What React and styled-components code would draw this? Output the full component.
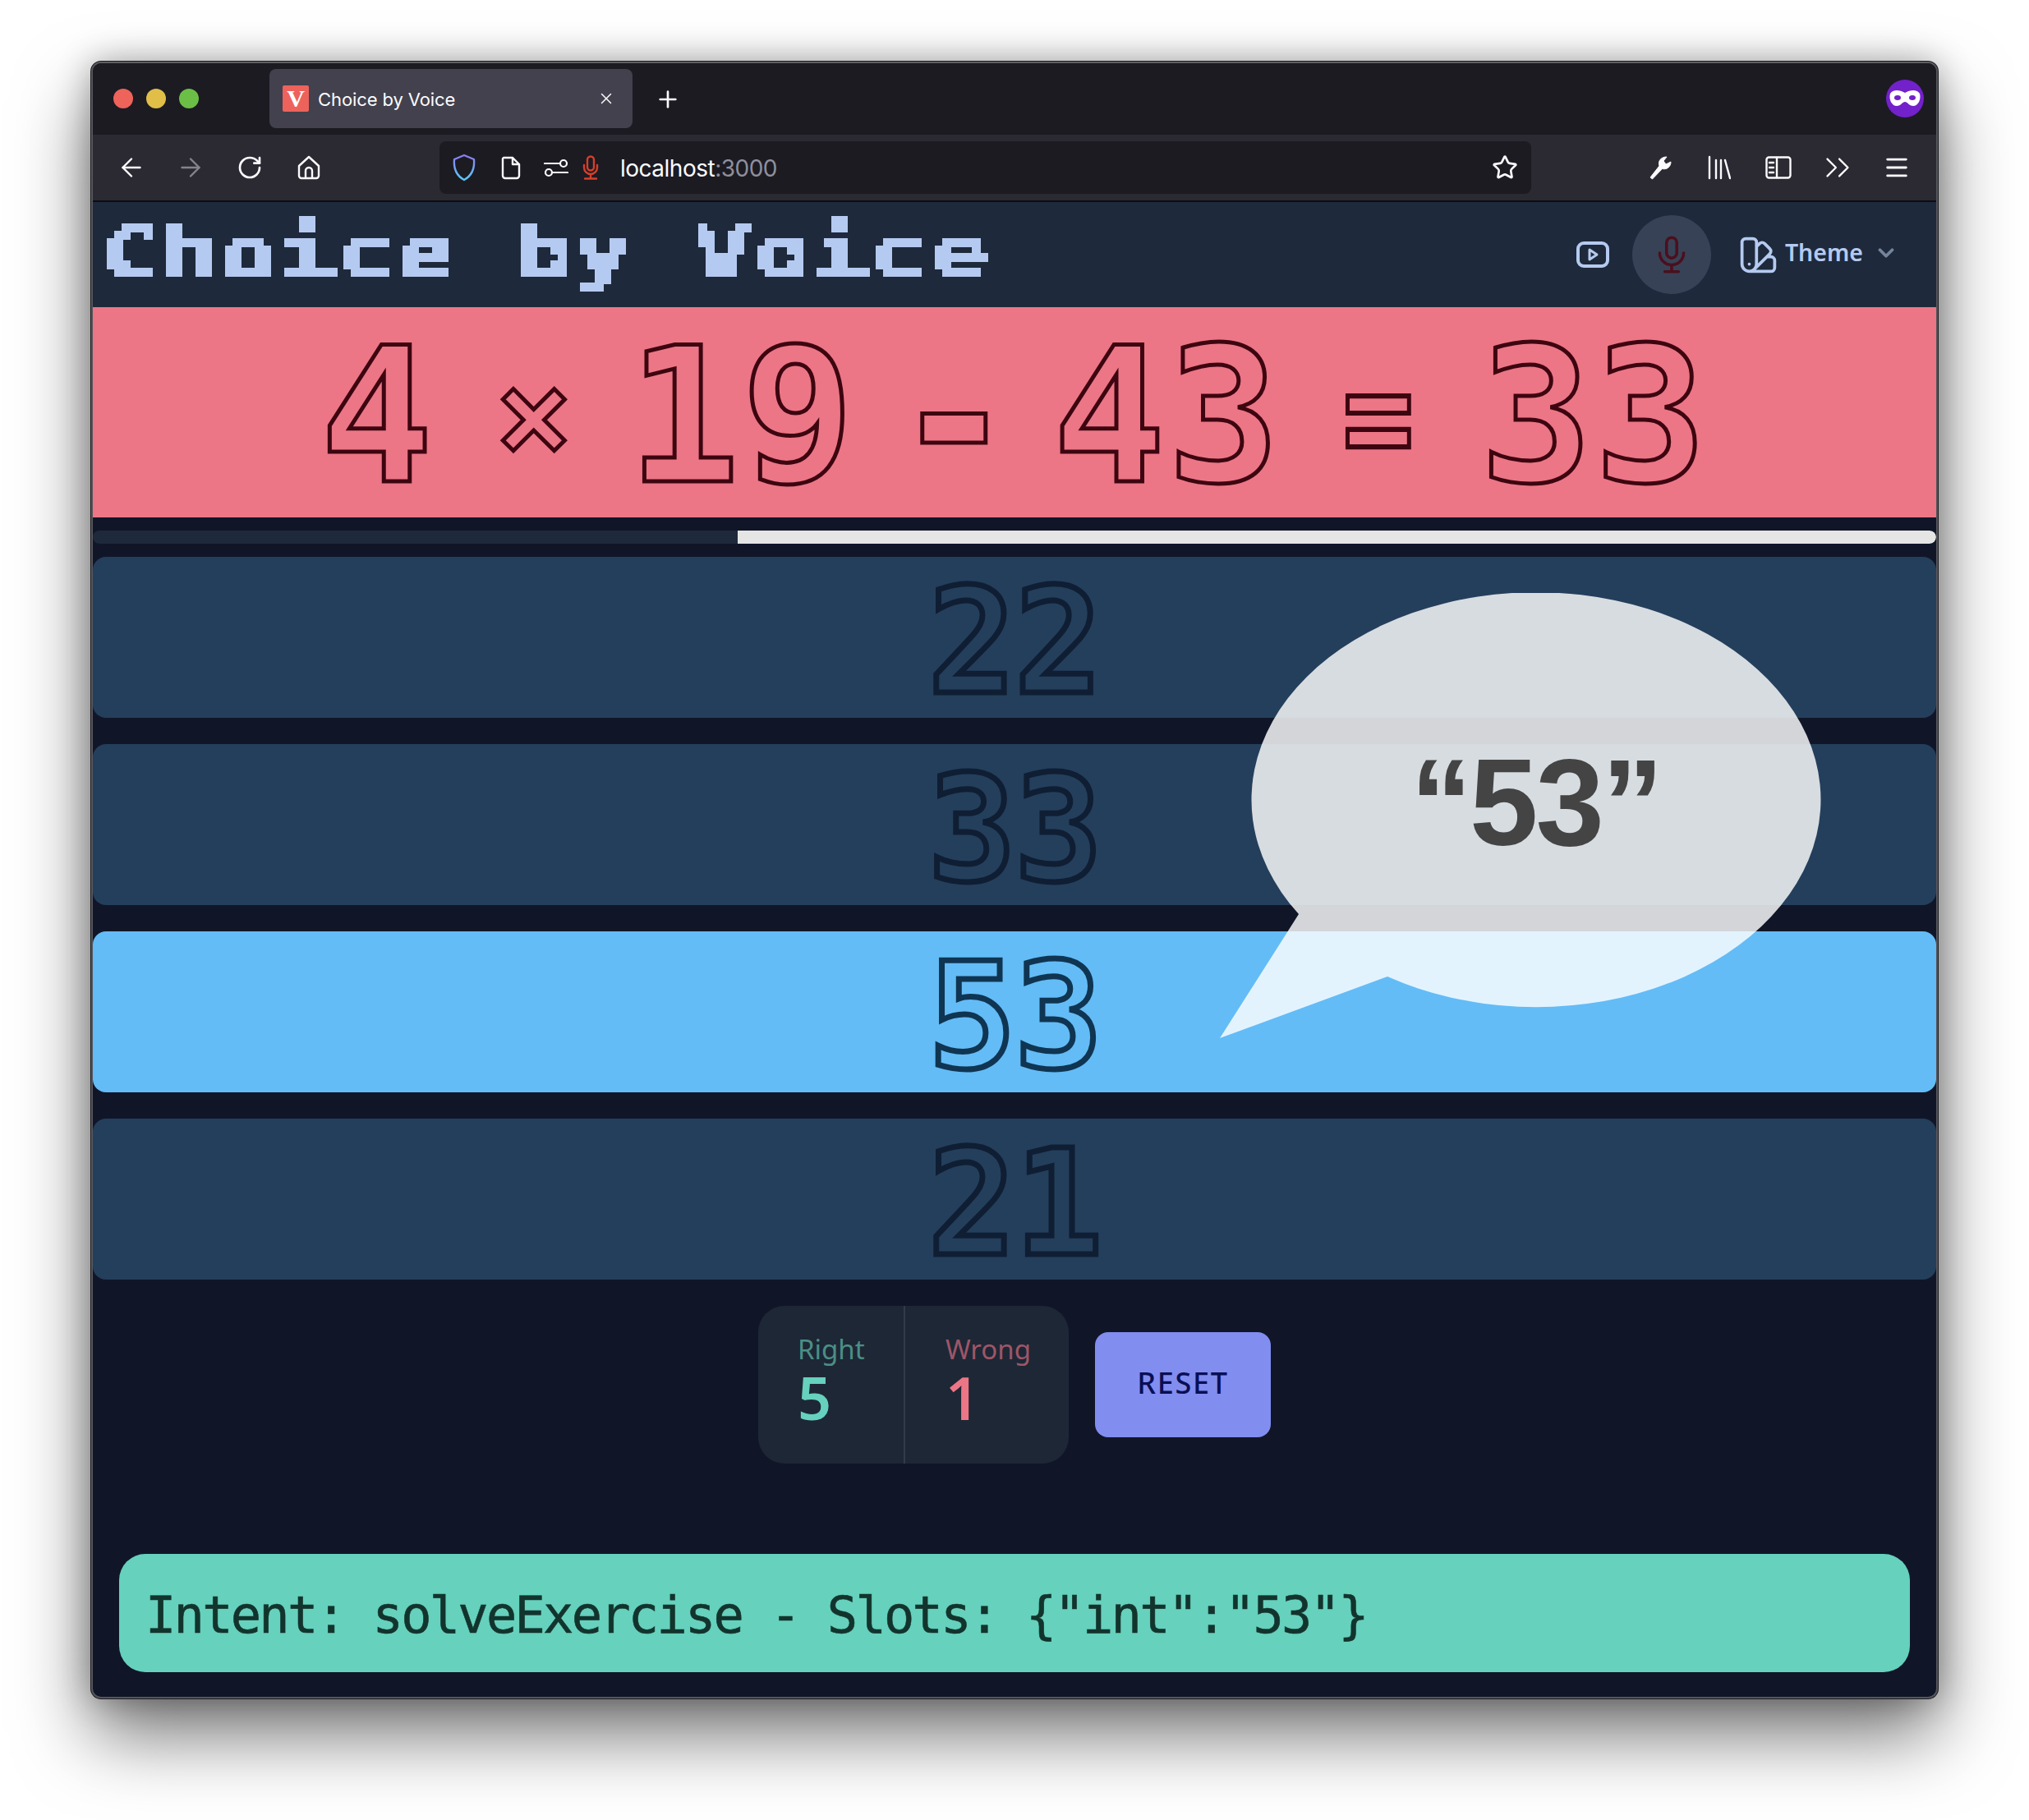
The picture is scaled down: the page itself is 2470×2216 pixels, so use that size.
import React from 'react';
import styled, { createGlobalStyle } from 'styled-components';
import { ArrowLeft, ArrowRight, RotateCw, Star, ChevronsRight, Menu, X, Plus, ChevronDown } from 'lucide-react';

const GlobalStyle = createGlobalStyle`
  html, body {
    margin: 0;
    background: #fff;
  }
  * { box-sizing: border-box; }
`;

const Page = styled.div`
  width: 2470px;
  height: 2216px;
  padding: 75px 111px 148px 111px;
`;

const Win = styled.div`
  position: relative;
  height: 100%;
  display: flex;
  flex-direction: column;
  overflow: hidden;
  border: 2px solid #55555c;
  border-top-color: #5f5f63;
  border-radius: 12px;
  background: #101628;
  box-shadow: 0 0 0 1px #1c1c20, 0 44px 90px rgba(0, 0, 0, 0.55), 0 0 40px rgba(0, 0, 0, 0.3);
`;

const TabBar = styled.div`
  height: 87px;
  flex: none;
  display: flex;
  align-items: flex-start;
  background: #1c1b22;
  padding: 7px 15px 0 25px;
`;

const Dots = styled.div`
  display: flex;
  gap: 16px;
  margin-top: 24px;
  margin-right: 86px;
`;

const Dot = styled.span`
  width: 24px;
  height: 24px;
  border-radius: 50%;
  background: ${(p) => p.$color};
`;

const Tab = styled.div`
  width: 442px;
  height: 72px;
  display: flex;
  align-items: center;
  padding: 0 21px 0 16px;
  background: #42414d;
  border-radius: 8px;
  color: #fbfbfe;
`;

const Favicon = styled.span`
  width: 32px;
  height: 32px;
  flex: none;
  display: flex;
  align-items: center;
  justify-content: center;
  background: #ee625c;
  border-radius: 2px;
  color: #fff;
  font: 700 30px "Liberation Serif", serif;
`;

const TabTitle = styled.span`
  margin: 2px 0 0 11px;
  font: 400 22px "Inter", sans-serif;
  letter-spacing: -0.1px;
  flex: 1;
`;

const NewTab = styled.span`
  margin: 21px 0 0 27px;
  color: #fbfbfe;
  display: flex;
`;

const Profile = styled.span`
  margin-left: auto;
  margin-top: 13px;
  display: flex;
`;

const ToolBar = styled.div`
  height: 82px;
  flex: none;
  display: flex;
  align-items: flex-start;
  padding: 8px 12px 0 11px;
  background: #2b2a33;
  border-bottom: 2px solid #0c0c10;
`;

const NavSlot = styled.span`
  width: ${(p) => p.$w || 72}px;
  height: 64px;
  flex: none;
  display: flex;
  align-items: center;
  justify-content: center;
  color: ${(p) => p.$color || '#fbfbfe'};
`;

const UrlBar = styled.div`
  width: 1329px;
  height: 64px;
  margin-left: 123px;
  display: flex;
  align-items: center;
  padding-left: 12px;
  background: #1c1b22;
  border-radius: 8px;
`;

const UrlText = styled.span`
  margin: 2px 0 0 10px;
  font: 400 28px "Inter", sans-serif;
  letter-spacing: -0.5px;
  color: #fbfbfe;
`;

const UrlPort = styled.span`
  color: #8f8f9d;
`;

const StarSlot = styled(NavSlot)`
  margin-left: auto;
  margin-right: 12px;
`;

const RightTools = styled.div`
  margin-left: auto;
  display: flex;
`;

const AppHeader = styled.header`
  height: 128px;
  flex: none;
  display: flex;
  align-items: center;
  padding: 0 46px 0 9px;
  background: #1e293b;
  color: #b5caf0;
`;

const TitleFilter = styled.div`
  width: 1120px;
  height: 128px;
  filter: url(#pixelate);
`;

const Title = styled.h1`
  margin: -2px 0 0;
  width: 840px;
  font: 700 88px/128px "DejaVu Sans Mono", monospace;
  white-space: pre;
  transform-origin: 0 0;
  transform: scaleX(1.36);
`;

const HeaderTools = styled.div`
  margin-left: auto;
  display: flex;
  align-items: center;
`;

const MicButton = styled.span`
  width: 96px;
  height: 96px;
  margin: 0 31px 0 28px;
  display: flex;
  align-items: center;
  justify-content: center;
  border-radius: 50%;
  background: #374257;
  color: #4c0f1c;
`;

const ThemeLabel = styled.span`
  margin: 0 13px 0 6px;
  font: 600 28.5px "Noto Sans", sans-serif;
  position: relative;
  top: -3px;
`;

const Chevron = styled.span`
  display: flex;
  color: #75849c;
  margin-top: -4px;
`;

const Equation = styled.div`
  height: 256px;
  flex: none;
  padding-top: 10px;
  display: flex;
  align-items: center;
  justify-content: center;
  background: #ec7686;
  color: transparent;
  -webkit-text-stroke: 5px #3d0510;
  font-family: "DejaVu Sans Mono", monospace;
  font-weight: 700;
`;

const Digits = styled.span`
  font-size: 228px;
  line-height: 246px;
  letter-spacing: 2px;
`;

const Sign = styled.span`
  font-size: ${(p) => p.$size}px;
  line-height: 246px;
  margin: ${(p) => p.$margin};
  transform: scaleY(${(p) => p.$stretch || 1});
`;

const Progress = styled.div`
  height: 16px;
  flex: none;
  margin: 16px 0;
  display: flex;
  justify-content: flex-end;
  background: #1e293b;
  border-radius: 8px;
  overflow: hidden;
`;

const ProgressFill = styled.div`
  width: ${(p) => p.$value}%;
  background: #e5e5e5;
  border-radius: 0 8px 8px 0;
`;

const Choices = styled.div`
  display: flex;
  flex-direction: column;
  gap: 32px;
  flex: none;
`;

const Choice = styled.div`
  height: 196px;
  padding-top: 12px;
  display: flex;
  align-items: center;
  justify-content: center;
  border-radius: 16px;
  background: ${(p) => (p.$active ? '#63bcf6' : '#243f5c')};
  color: transparent;
  -webkit-text-stroke: 7px ${(p) => (p.$active ? '#0f3552' : '#0f1e33')};
  font: 700 178px/184px "DejaVu Sans Mono", monospace;
  letter-spacing: -2px;
`;

const Footer = styled.div`
  margin-top: 32px;
  display: flex;
  justify-content: center;
  align-items: center;
  gap: 32px;
  flex: none;
`;

const Stats = styled.div`
  width: 378px;
  height: 192px;
  display: flex;
  background: #1e2736;
  border-radius: 32px;
  overflow: hidden;
`;

const Stat = styled.div`
  flex: ${(p) => (p.$first ? '0 0 177px' : '1')};
  padding: 31px 0 0 ${(p) => (p.$first ? 48 : 49)}px;
  border-left: ${(p) => (p.$first ? 'none' : '2px solid #323b4c')};
  font-family: "Noto Sans", sans-serif;
`;

const StatLabel = styled.div`
  font-size: 33px;
  line-height: 44px;
  color: ${(p) => p.$color};
`;

const StatValue = styled.div`
  font-size: 72px;
  font-weight: 600;
  line-height: 72px;
  color: ${(p) => p.$color};
`;

const ResetButton = styled.button`
  width: 214px;
  height: 128px;
  padding: 0 0 6px;
  border: 0;
  border-radius: 16px;
  background: #828df0;
  color: #090f55;
  font: 500 36px "Noto Sans", sans-serif;
  letter-spacing: 1.7px;
`;

const IntentBar = styled.div`
  height: 144px;
  margin: 110px 32px 0;
  flex: none;
  display: flex;
  align-items: center;
  padding: 5px 32px 0;
  border-radius: 32px;
  background: #66d1bd;
  color: #12342d;
  font: 400 62px "DejaVu Sans Mono", monospace;
  letter-spacing: -2.75px;
  -webkit-text-stroke: 0.6px #12342d;
  white-space: pre;
`;

const Bubble = styled.div`
  position: absolute;
  left: 1372px;
  top: 645px;
  width: 733px;
  height: 542px;
`;

const BubbleShape = styled.svg`
  display: block;
`;

const BubbleText = styled.div`
  position: absolute;
  left: 38px;
  top: 0;
  width: 693px;
  height: 505px;
  padding-top: 6px;
  display: flex;
  align-items: center;
  justify-content: center;
  color: #444;
  font: 700 150px "Liberation Sans", sans-serif;
  letter-spacing: -3px;
`;

const stroke = { fill: 'none', stroke: 'currentColor', strokeLinecap: 'round', strokeLinejoin: 'round' };

const Shield = () => (
  <svg width="30" height="34" viewBox="0 0 30 34" fill="none">
    <defs>
      <linearGradient id="shieldGrad" x1="0" y1="0" x2="0" y2="1">
        <stop offset="0" stopColor="#8c7cf0" />
        <stop offset="1" stopColor="#58c8f5" />
      </linearGradient>
    </defs>
    <path d="M15 2 L27 7 C28 18 24 27 15 32 C6 27 2 18 3 7 Z" stroke="url(#shieldGrad)" strokeWidth="2.4" strokeLinejoin="round" />
  </svg>
);

const PageIcon = () => (
  <svg width="26" height="30" viewBox="0 0 26 30" {...stroke} strokeWidth="2.4">
    <path d="M4 3 h11 l8 8 v14 a3 3 0 0 1 -3 3 H6 a3 3 0 0 1 -3 -3 V4 z M15 3 v8 h8" />
  </svg>
);

const PermIcon = () => (
  <svg width="30" height="24" viewBox="0 0 30 24" {...stroke} strokeWidth="2.2">
    <path d="M1 7 h18 M11 18 h18" />
    <circle cx="24" cy="7" r="4" />
    <circle cx="6" cy="18" r="4" />
  </svg>
);

const MozMic = () => (
  <svg width="20" height="30" viewBox="0 0 20 30" {...stroke} strokeWidth="2.4" color="#d4402b">
    <rect x="6" y="1.5" width="8" height="17" rx="4" />
    <path d="M2 12 v3 a8 8 0 0 0 16 0 v-3 M10 23 v5 M3 28.5 h14" />
  </svg>
);

const HomeIcon = () => (
  <svg width="30" height="30" viewBox="0 0 30 30" {...stroke} strokeWidth="2.4">
    <path d="M15 2 L27 13 V25 a3 3 0 0 1 -3 3 H6 a3 3 0 0 1 -3 -3 V13 Z M11 28 V19 a4 4 0 0 1 8 0 V28" />
  </svg>
);

const WrenchIcon = () => (
  <svg width="30" height="30" viewBox="0 0 30 30" fill="none">
    <path d="M3 27 L14 13 C12 7 16 2 23 2 L19 7 L22 11 L28 8 C28 14 23 18 17.5 16.5 L5.5 29 Z" fill="#fbfbfe" stroke="#fbfbfe" strokeWidth="1" strokeLinejoin="round" />
  </svg>
);

const LibraryIcon = () => (
  <svg width="28" height="30" viewBox="0 0 28 30" {...stroke} strokeWidth="2.4">
    <path d="M2 2 V28 M10 6 V28 M16 6 V28 M21 6 L27 28" />
  </svg>
);

const SidebarIcon = () => (
  <svg width="32" height="28" viewBox="0 0 32 28" {...stroke} strokeWidth="2.4">
    <rect x="1.5" y="1.5" width="29" height="25" rx="3" />
    <path d="M14 2 V26 M5 8 h5 M5 14 h5 M5 20 h5" />
  </svg>
);

const ProfileIcon = () => (
  <svg width="46" height="46" viewBox="0 0 46 46">
    <circle cx="23" cy="23" r="23" fill="#7321cb" />
    <path d="M5 17 C8 12 16 12 23 16 C30 12 38 12 41 17 C43 24 39 32 33 32 C28 32 26 27 23 27 C20 27 18 32 13 32 C7 32 3 24 5 17 Z" fill="#fff" />
    <ellipse cx="14" cy="22" rx="4" ry="3" fill="#7321cb" />
    <ellipse cx="32" cy="22" rx="4" ry="3" fill="#7321cb" />
  </svg>
);

const PlayIcon = () => (
  <svg width="40" height="32" viewBox="0 0 40 32" {...stroke} strokeWidth="4">
    <rect x="2" y="2" width="36" height="28" rx="7" />
    <path d="M16 10 L25 16 L16 22 Z" strokeWidth="3" />
  </svg>
);

const MicIcon = () => (
  <svg width="50" height="50" viewBox="0 0 24 24" {...stroke} strokeWidth="1.7">
    <path d="M19 11a7 7 0 01-7 7m0 0a7 7 0 01-7-7m7 7v4m0 0H8m4 0h4m-4-8a3 3 0 01-3-3V5a3 3 0 116 0v6a3 3 0 01-3 3z" />
  </svg>
);

const SwatchIcon = () => (
  <svg width="53" height="53" viewBox="0 0 24 24" {...stroke} strokeWidth="1.7">
    <path d="M7 21a4 4 0 01-4-4V5a2 2 0 012-2h4a2 2 0 012 2v12a4 4 0 01-4 4zm0 0h12a2 2 0 002-2v-4a2 2 0 00-2-2h-2.343M11 7.343l1.657-1.657a2 2 0 012.828 0l2.829 2.829a2 2 0 010 2.828l-8.486 8.485M7 17h.01" />
  </svg>
);

const choices = [
  { value: '22' },
  { value: '33' },
  { value: '53', active: true },
  { value: '21' },
];

export default function App() {
  return (
    <Page>
      <GlobalStyle />
      <svg width="0" height="0" style={{ position: 'absolute' }}>
        <filter id="pixelate" x="0" y="0" width="100%" height="100%" colorInterpolationFilters="sRGB">
          <feFlood x="4" y="4" width="1" height="1" />
          <feComposite width="9" height="9" />
          <feTile result="grid" />
          <feComposite in="SourceGraphic" in2="grid" operator="in" />
          <feMorphology operator="dilate" radius="4.5" />
          <feComponentTransfer>
            <feFuncA type="discrete" tableValues="0 1" />
          </feComponentTransfer>
        </filter>
      </svg>
      <Win>
        <TabBar>
          <Dots>
            <Dot $color="#ee635a" />
            <Dot $color="#e0be48" />
            <Dot $color="#6bbf46" />
          </Dots>
          <Tab>
            <Favicon>V</Favicon>
            <TabTitle>Choice by Voice</TabTitle>
            <X size={22} strokeWidth={1.6} />
          </Tab>
          <NewTab><Plus size={32} strokeWidth={2} /></NewTab>
          <Profile><ProfileIcon /></Profile>
        </TabBar>
        <ToolBar>
          <NavSlot><ArrowLeft size={36} strokeWidth={1.6} /></NavSlot>
          <NavSlot $color="#85848c"><ArrowRight size={36} strokeWidth={1.6} /></NavSlot>
          <NavSlot><RotateCw size={32} strokeWidth={2} /></NavSlot>
          <NavSlot><HomeIcon /></NavSlot>
          <UrlBar>
            <NavSlot $w={36}><Shield /></NavSlot>
            <NavSlot $w={78}><PageIcon /></NavSlot>
            <NavSlot $w={32}><PermIcon /></NavSlot>
            <NavSlot $w={52}><MozMic /></NavSlot>
            <UrlText>localhost<UrlPort>:3000</UrlPort></UrlText>
            <StarSlot $w={40}><Star size={32} strokeWidth={2} /></StarSlot>
          </UrlBar>
          <RightTools>
            <NavSlot><WrenchIcon /></NavSlot>
            <NavSlot><LibraryIcon /></NavSlot>
            <NavSlot><SidebarIcon /></NavSlot>
            <NavSlot><ChevronsRight size={50} strokeWidth={1.1} /></NavSlot>
            <NavSlot><Menu size={34} strokeWidth={2} /></NavSlot>
          </RightTools>
        </ToolBar>
        <AppHeader>
          <TitleFilter>
            <Title>Choice by Voice</Title>
          </TitleFilter>
          <HeaderTools>
            <PlayIcon />
            <MicButton><MicIcon /></MicButton>
            <SwatchIcon />
            <ThemeLabel>Theme</ThemeLabel>
            <Chevron><ChevronDown size={30} strokeWidth={3} /></Chevron>
          </HeaderTools>
        </AppHeader>
        <Equation>
          <Digits>4</Digits>
          <Sign $size={155} $margin="0 67px 0 74px">×</Sign>
          <Digits>19</Digits>
          <Sign $size={250} $margin="0 45px 0 44px">-</Sign>
          <Digits>43</Digits>
          <Sign $size={145} $stretch={1.25} $margin="0 80px 0 74px">=</Sign>
          <Digits>33</Digits>
        </Equation>
        <Progress><ProgressFill $value={65} /></Progress>
        <Choices>
          {choices.map((c) => (
            <Choice key={c.value} $active={c.active}>{c.value}</Choice>
          ))}
        </Choices>
        <Footer>
          <Stats>
            <Stat $first>
              <StatLabel $color="#4b8f85">Right</StatLabel>
              <StatValue $color="#66d1bd">5</StatValue>
            </Stat>
            <Stat>
              <StatLabel $color="#9d5667">Wrong</StatLabel>
              <StatValue $color="#ec7686">1</StatValue>
            </Stat>
          </Stats>
          <ResetButton>RESET</ResetButton>
        </Footer>
        <IntentBar>{'Intent: solveExercise - Slots: {"int":"53"}'}</IntentBar>
        <Bubble>
          <BubbleShape width="733" height="542" viewBox="0 0 733 542">
            <path
              d="M96 391 A346.5 252.5 0 1 1 204 467 L0 542 Z"
              fill="rgba(255,255,255,0.82)"
            />
          </BubbleShape>
          <BubbleText>“53”</BubbleText>
        </Bubble>
      </Win>
    </Page>
  );
}
